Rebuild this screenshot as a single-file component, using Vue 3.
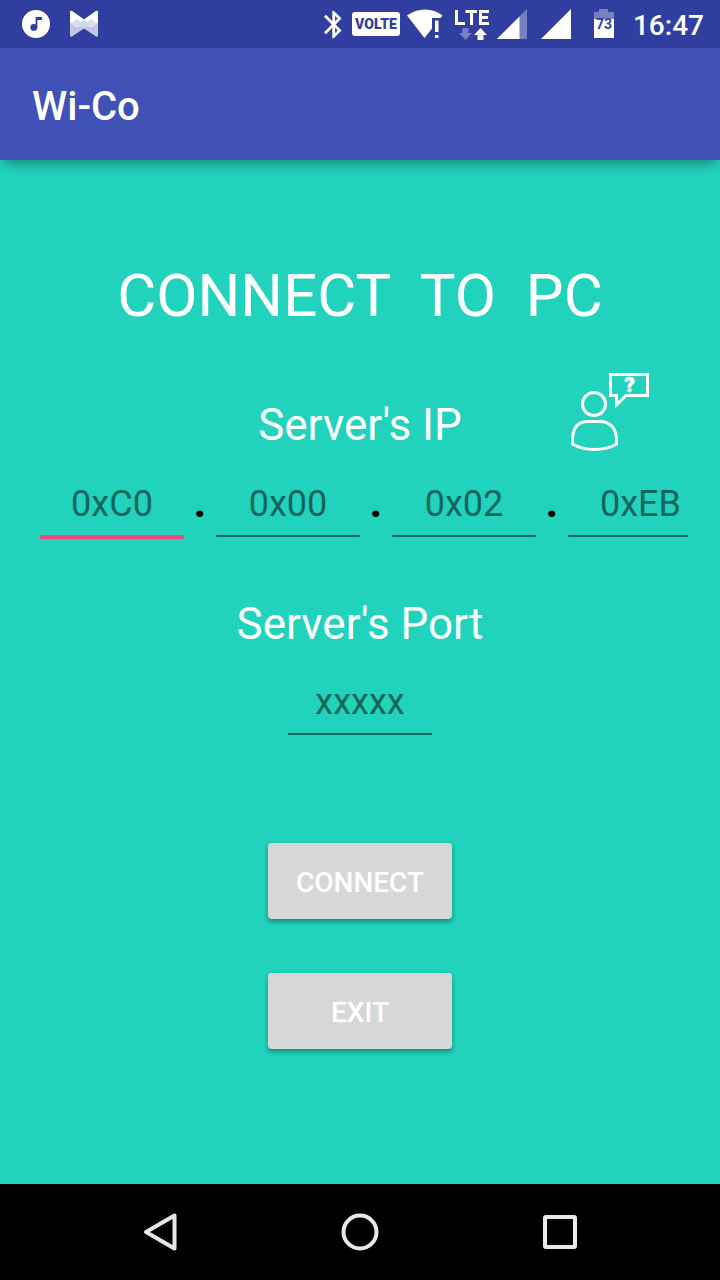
<script setup>
import { ref } from 'vue'

const octets = ref([
  { hint: '0xC0', value: '' },
  { hint: '0x00', value: '' },
  { hint: '0x02', value: '' },
  { hint: '0xEB', value: '' }
])
const active = ref(0)
const port = ref('')
</script>

<template>
  <div class="screen">
    <div class="status">
      <svg class="music" width="28" height="32" viewBox="0 0 28 32" aria-hidden="true">
        <circle cx="14" cy="16" r="14" fill="#fff" />
        <circle cx="11.8" cy="19.4" r="3.4" fill="#303f9f" />
        <path d="M13.6 9H20V12H15.4V19.4H13.6Z" fill="#303f9f" />
      </svg>
      <svg class="wings" width="28" height="32" viewBox="0 0 28 32" aria-hidden="true">
        <path d="M0 4Q0 2 2 3L14 11.5L26 3Q28 2 28 4V27Q28 29.5 26 28.5L14 20.5L2 28.5Q0 29.5 0 27Z" fill="#c1c6e4" />
        <path d="M0 15L7 10L14 14L21 10L28 15L21 20L14 16L7 20Z" fill="#dcdff0" />
        <path d="M14 11.5L20 16L14 20.5L8 16Z" fill="#d2d5eb" />
        <path d="M0 4Q0 2 2 3L14 11.5L11 14L7 11L0 15.5ZM28 4Q28 2 26 3L14 11.5L17 14L21 11L28 15.5Z" fill="#fff" />
      </svg>
      <svg class="bluetooth" width="18" height="29" viewBox="5 2 13 20" aria-hidden="true">
        <path fill="#fff" d="M17.71 7.71L12 2h-1v7.59L6.41 5 5 6.41 10.59 12 5 17.59 6.41 19 11 14.41V22h1l5.71-5.71-4.3-4.29 4.3-4.29zM13 5.83l1.88 1.88L13 9.59V5.83zm1.88 10.46L13 18.17v-3.76l1.88 1.88z" />
      </svg>
      <span class="volte">VOLTE</span>
      <svg class="wifi" width="36" height="32" viewBox="0 0 36 32" aria-hidden="true">
        <path fill="#fff" d="M0 7.5Q8 1.500 18 1.500T35.500 7.500L33.500 10H25V20.500L17.500 30Z" />
        <path fill="#fff" d="M28 12.500H31.500V24H28ZM28 27H31.500V30H28Z" />
      </svg>
      <svg class="lte" width="36" height="32" viewBox="0 0 36 32" aria-hidden="true">
        <path fill="none" stroke="#fff" stroke-width="3" d="M2.500 2V15.500H11M11.500 3.500H23M17.500 3.500V17M35 3.500H26.500V15.500H35M26.500 9.500H34" />
        <path fill="#7780c0" d="M8.500 20H14.500V25H18L11.500 32L5 25H8.500Z" />
        <path fill="#fff" d="M23.500 32H29.500V27H33L26.500 20L20 27H23.500Z" />
      </svg>
      <svg class="signal" width="30" height="32" viewBox="0 0 30 32" aria-hidden="true">
        <path fill="#7780c0" d="M0 31L30 1V31Z" />
        <path fill="#fff" d="M0 31L22.500 8.500V31Z" />
      </svg>
      <svg class="signal-two" width="30" height="32" viewBox="0 0 30 32" aria-hidden="true">
        <path fill="#fff" d="M0 31L30 1V31Z" />
      </svg>
      <svg class="battery" width="20" height="32" viewBox="0 0 20 32" aria-hidden="true">
        <path fill="#7780c0" d="M5 1H14V4H20V12H0V4H5Z" />
        <path fill="#fff" d="M0 11H20V30H0Z" />
        <text x="10" y="21" text-anchor="middle" font-size="14" font-weight="700" fill="#303f9f">73</text>
      </svg>
      <time class="clock">16:47</time>
    </div>

    <header class="appbar">
      <h1>Wi-Co</h1>
    </header>

    <main>
      <form @submit.prevent>
        <h2>CONNECT&nbsp; TO&nbsp; PC</h2>

        <div class="ip-head">
          <span id="ip-label" class="label">Server's IP</span>
          <button type="button" class="help" aria-label="Help">
            <svg width="80" height="80" viewBox="0 0 80 80" aria-hidden="true">
              <g fill="none" stroke="#fff" stroke-width="3">
                <circle cx="24" cy="32" r="11.5" />
                <path d="M2.500 72V67C3 55 9 49.500 18 49.500H30C39 49.500 46 55 46.500 67V72C40 76 33 77.500 24.500 77.500S9 76 2.500 72Z" />
                <path d="M40.500 2.500H77.500V23.500H56L46.500 33V23.500H40.500Z" />
              </g>
              <text x="59.5" y="20" text-anchor="middle" font-size="20" font-weight="900" fill="#fff" stroke="#fff" stroke-width="0.6">?</text>
            </svg>
          </button>
        </div>

        <div class="ip-row" role="group" aria-labelledby="ip-label">
          <template v-for="(octet, i) in octets" :key="i">
            <span v-if="i > 0" class="dot">.</span>
            <input
              v-model="octet.value"
              class="field"
              :class="{ active: active === i, last: i === octets.length - 1 }"
              type="text"
              :placeholder="octet.hint"
              :aria-label="`Server's IP, part ${i + 1}`"
              @focus="active = i"
            />
          </template>
        </div>

        <label class="label port-label" for="port">Server's Port</label>
        <input
          id="port"
          v-model="port"
          class="field"
          :class="{ active: active === 4 }"
          type="text"
          placeholder="xxxxx"
          @focus="active = 4"
        />

        <div class="actions">
          <button type="submit" class="action">CONNECT</button>
          <button type="button" class="action">EXIT</button>
        </div>
      </form>
    </main>

    <nav aria-label="System">
      <button type="button" aria-label="Back">
        <svg width="40" height="40" viewBox="0 0 40 40" aria-hidden="true">
          <path d="M6 20L34.500 3.500V36.500Z" />
        </svg>
      </button>
      <button type="button" aria-label="Home">
        <svg width="40" height="40" viewBox="0 0 40 40" aria-hidden="true">
          <circle cx="20" cy="20" r="16.5" />
        </svg>
      </button>
      <button type="button" aria-label="Recent apps">
        <svg width="40" height="40" viewBox="0 0 40 40" aria-hidden="true">
          <rect x="5" y="5" width="30" height="30" rx="1" />
        </svg>
      </button>
    </nav>
  </div>
</template>

<style>
body {
  margin: 0;
  background: #21d3bd;
}
</style>

<style scoped>
.screen {
  display: flex;
  flex-direction: column;
  min-height: 100vh;
  background: #21d3bd;
  color: #fff;
  font-family: Roboto, "Liberation Sans", sans-serif;
}

svg {
  display: block;
  flex: none;
}

button,
input {
  font-family: inherit;
  border: 0;
  background: none;
  padding: 0;
  margin: 0;
  border-radius: 0;
  outline: none;
}

.status {
  display: flex;
  align-items: center;
  height: 48px;
  padding: 0 16px 0 22px;
  background: #303f9f;
}

.wings {
  margin-left: 20px;
}

.bluetooth {
  margin-left: auto;
}

.volte {
  width: 48px;
  margin-left: 10px;
  border-radius: 3px;
  background: #fff;
  color: #303f9f;
  font-size: 14px;
  font-weight: 900;
  line-height: 24px;
  text-align: center;
}

.wifi {
  margin-left: 7px;
}

.lte {
  margin-left: 11px;
}

.signal {
  margin-left: 7px;
}

.signal-two {
  margin-left: 14px;
}

.battery {
  margin-left: 23px;
}

.clock {
  margin-left: 19px;
  padding-top: 4px;
  font-size: 28px;
  font-weight: 500;
  line-height: 32px;
}

.appbar {
  display: flex;
  align-items: center;
  height: 112px;
  padding: 0 32px;
  background: #3f51b5;
  box-shadow: 0 8px 12px -4px rgba(0, 0, 0, 0.35);
}

h1 {
  margin: 6px 0 0;
  font-size: 40px;
  font-weight: 500;
  line-height: 48px;
}

main {
  flex: 1;
  padding: 100px 32px 60px 40px;
}

form {
  display: flex;
  flex-direction: column;
  align-items: center;
}

h2 {
  align-self: stretch;
  margin: 0 8px 0 0;
  font-size: 60px;
  font-weight: 400;
  line-height: 72px;
  text-align: center;
}

.ip-head {
  display: grid;
  grid-template-columns: 1fr auto 1fr;
  align-items: end;
  align-self: stretch;
  margin: 40px 8px 0 0;
}

.label {
  grid-column: 2;
  font-size: 44px;
  line-height: 52px;
}

.ip-head .label {
  padding-bottom: 1px;
}

.help {
  justify-self: end;
  margin-right: 30px;
  cursor: pointer;
}

.ip-row {
  display: flex;
  align-items: flex-start;
  align-self: stretch;
  margin-top: 28px;
}

.field {
  box-sizing: border-box;
  flex: none;
  width: 144px;
  height: 57px;
  padding-bottom: 7px;
  border-bottom: 2px solid #11665c;
  color: #11665c;
  font-size: 36px;
  text-align: center;
}

.field::placeholder {
  color: #11665c;
  opacity: 1;
}

.field.active {
  height: 59px;
  border-bottom: 4px solid #ff4081;
}

.field.last {
  flex: 1;
  width: auto;
  min-width: 0;
  padding-right: 7px;
  text-align: right;
}

.dot {
  flex: none;
  width: 32px;
  color: #000;
  font-size: 44px;
  font-weight: 700;
  line-height: 44px;
  text-align: center;
}

.port-label {
  margin: 59px 8px 28px 0;
}

#port {
  margin-right: 8px;
}

.actions {
  display: flex;
  flex-direction: column;
  gap: 54px;
  margin: 108px 8px 0 0;
}

.action {
  width: 184px;
  height: 76px;
  padding-top: 2px;
  border-radius: 4px;
  background: #d6d8d7;
  box-shadow: 0 3px 5px rgba(0, 0, 0, 0.35);
  color: #fff;
  font-size: 28px;
  font-weight: 500;
  cursor: pointer;
}

nav {
  display: grid;
  grid-template-columns: repeat(3, 1fr);
  height: 96px;
  padding: 0 60px;
  background: #000;
}

nav button {
  display: flex;
  align-items: center;
  justify-content: center;
  cursor: pointer;
}

nav svg {
  fill: none;
  stroke: #e8e8e8;
  stroke-width: 4;
  stroke-linejoin: round;
}
</style>
